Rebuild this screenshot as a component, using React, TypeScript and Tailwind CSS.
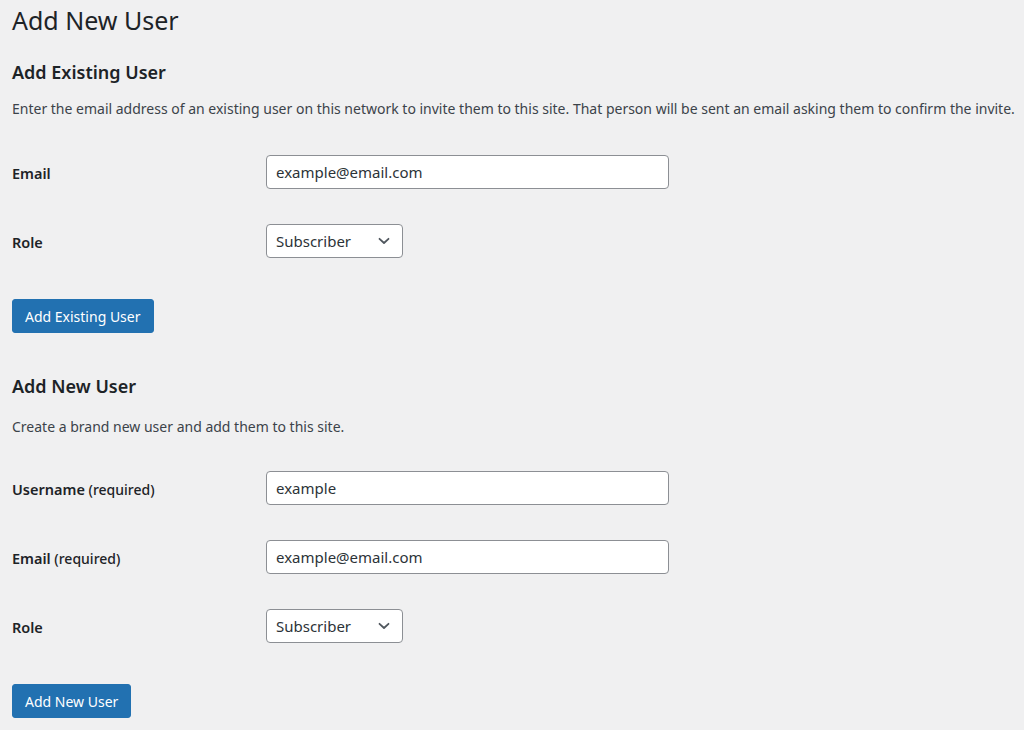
import React from "react";

const font = { fontFamily: '"Noto Sans", "Open Sans", Arial, sans-serif' };

function Chevron() {
  return (
    <svg width="12" height="8" viewBox="0 0 12 8" className="absolute right-[12px] top-1/2 -translate-y-1/2">
      <path d="M1.5 1.8 L6 6 L10.5 1.8" fill="none" stroke="#50575e" strokeWidth="1.8" strokeLinecap="round" strokeLinejoin="round" />
    </svg>
  );
}

function TextRow({ label, extra, value, mt }: { label: string; extra?: string; value: string; mt: string }) {
  return (
    <div className={`flex items-center h-[34px] ${mt}`}>
      <div className="w-[254px] shrink-0 pt-[3px] text-[14.5px] font-semibold text-[#1d2327]">
        {label}
        {extra && <span className="font-medium text-[14px] text-[#1d2327]"> {extra}</span>}
      </div>
      <input
        readOnly
        value={value}
        className="w-[403px] h-[34px] rounded-[4px] border border-[#8c8f94] bg-white px-[9px] text-[15px] text-[#2c3338] outline-none"
        style={font}
      />
    </div>
  );
}

function RoleRow({ mt }: { mt: string }) {
  return (
    <div className={`flex items-center h-[34px] ${mt}`}>
      <div className="w-[254px] shrink-0 pt-[3px] text-[14.5px] font-semibold text-[#1d2327]">Role</div>
      <div className="relative w-[137px] h-[34px] rounded-[4px] border border-[#8c8f94] bg-white flex items-center pl-[9px] text-[15px] text-[#2c3338]">
        Subscriber
        <Chevron />
      </div>
    </div>
  );
}

function Button({ children, mt }: { children: React.ReactNode; mt: string }) {
  return (
    <div className={mt}>
      <button className="h-[34px] rounded-[3px] bg-[#2271b1] border border-[#2271b1] px-[12px] text-[14px] text-white" style={font}>
        {children}
      </button>
    </div>
  );
}

export default function App() {
  return (
    <div className="min-h-[730px] w-full bg-[#f0f0f1] px-[12px] overflow-hidden" style={font}>
      <h1 className="mt-[5px] h-[30px] leading-[30px] text-[25px] font-normal text-[#1d2327]">Add New User</h1>
      <h2 className="mt-[25px] h-[24px] leading-[24px] text-[18px] font-semibold text-[#1d2327]">Add Existing User</h2>
      <p className="mt-[15px] h-[20px] leading-[20px] text-[14px] text-[#3c434a] whitespace-nowrap">
        Enter the email address of an existing user on this network to invite them to this site. That person will be sent an email asking them to confirm the invite.
      </p>
      <TextRow label="Email" value="example@email.com" mt="mt-[36px]" />
      <RoleRow mt="mt-[35px]" />
      <Button mt="mt-[41px]">Add Existing User</Button>
      <h2 className="mt-[41px] h-[24px] leading-[24px] text-[18px] font-semibold text-[#1d2327]">Add New User</h2>
      <p className="mt-[19px] h-[20px] leading-[20px] text-[14px] text-[#3c434a] whitespace-nowrap">
        Create a brand new user and add them to this site.
      </p>
      <TextRow label="Username" extra="(required)" value="example" mt="mt-[34px]" />
      <TextRow label="Email" extra="(required)" value="example@email.com" mt="mt-[35px]" />
      <RoleRow mt="mt-[35px]" />
      <Button mt="mt-[41px]">Add New User</Button>
    </div>
  );
}
